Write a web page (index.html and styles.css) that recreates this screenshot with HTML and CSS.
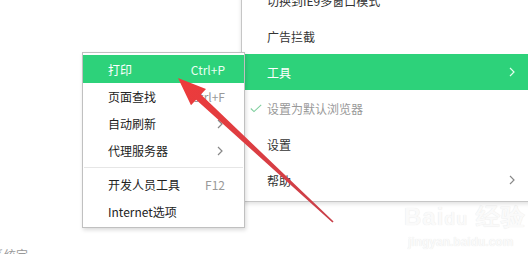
FILE: index.html
```html
<!DOCTYPE html>
<html lang="zh">
<head>
<meta charset="utf-8">
<link rel="stylesheet" href="styles.css">
</head>
<body>
<div class="stage">
  <div class="bg-text">系统定</div>
  <div class="watermark">
    <div class="wm-logo">Bai<span class="wm-du">du</span> 经验</div>
    <div class="wm-url">jingyan.baidu.com</div>
  </div>

  <div class="menu main-menu">
    <div class="item"><span class="label">切换到IE9多窗口模式</span></div>
    <div class="item"><span class="label">广告拦截</span></div>
    <div class="item active"><span class="label">工具</span><span class="chev">
      <svg width="6" height="10" viewBox="0 0 6 10"><path d="M1 1 L5 5 L1 9" fill="none" stroke="currentColor" stroke-width="1.2"/></svg></span></div>
    <div class="item muted"><span class="check">
      <svg width="12" height="9" viewBox="0 0 12 9"><path d="M0.8 4.5 L4 7.6 L11.2 0.8" fill="none" stroke="#7fcf9e" stroke-width="1.1"/></svg></span><span class="label">设置为默认浏览器</span></div>
    <div class="item"><span class="label">设置</span></div>
    <div class="item"><span class="label">帮助</span><span class="chev">
      <svg width="6" height="10" viewBox="0 0 6 10"><path d="M1 1 L5 5 L1 9" fill="none" stroke="currentColor" stroke-width="1.2"/></svg></span></div>
  </div>

  <div class="menu sub-menu">
    <div class="sitem active"><span class="label">打印</span><span class="key">Ctrl+P</span></div>
    <div class="sitem"><span class="label">页面查找</span><span class="key">Ctrl+F</span></div>
    <div class="sitem"><span class="label">自动刷新</span><span class="chev">
      <svg width="6" height="10" viewBox="0 0 6 10"><path d="M1 1 L5 5 L1 9" fill="none" stroke="currentColor" stroke-width="1.2"/></svg></span></div>
    <div class="sitem"><span class="label">代理服务器</span><span class="chev">
      <svg width="6" height="10" viewBox="0 0 6 10"><path d="M1 1 L5 5 L1 9" fill="none" stroke="currentColor" stroke-width="1.2"/></svg></span></div>
    <div class="sep"></div>
    <div class="sitem"><span class="label">开发人员工具</span><span class="key">F12</span></div>
    <div class="sitem"><span class="label">Internet选项</span></div>
  </div>

  <svg class="arrow" width="528" height="254" viewBox="0 0 528 254">
    <defs>
      <linearGradient id="ag" x1="0" y1="0" x2="1" y2="1">
        <stop offset="0" stop-color="#ee3b3b"/>
        <stop offset="1" stop-color="#c8404a"/>
      </linearGradient>
    </defs>
    <polygon fill="url(#ag)" points="178,78 206,89 200.9,94.5 333.6,221.6 332.4,222.4 196.1,99.7 191,105.2"/>
  </svg>
</div>
</body>
</html>
```

FILE: styles.css
```css
* { box-sizing: border-box; }
html, body { margin: 0; padding: 0; background: #fff; }
body {
  font-family: "Noto Sans CJK SC", "Microsoft YaHei", "Noto Sans", sans-serif;
  font-size: 12px;
  color: #333;
}
.stage {
  position: relative;
  width: 528px;
  height: 254px;
  overflow: hidden;
  background: #fff;
}
.bg-text {
  position: absolute;
  left: -8px;
  top: 247px;
  color: #999;
  font-size: 12px;
  line-height: 16px;
}
.watermark {
  position: absolute;
  left: 404px;
  top: 204px;
  color: #fafafa;
  text-shadow: 0 0 1px #e2e2e2;
}
.wm-logo { font-family: "Liberation Sans", sans-serif; font-size: 24px; font-weight: bold; line-height: 26px; letter-spacing: 1px; }
.wm-du { font-size: 18px; }
.wm-url { font-family: "Liberation Sans", sans-serif; font-size: 12px; font-weight: bold; line-height: 16px; margin-left: 4px; margin-top: 2px; }

.menu {
  position: absolute;
  background: #fff;
  display: flex;
  flex-direction: column;
}
.main-menu {
  left: 241px;
  top: -22px;
  width: 300px;
  border: 1px solid #c6c6c6;
  padding: 3px 0 3px 0;
  box-shadow: 0 2px 4px rgba(0,0,0,0.12);
}
.item {
  height: 36px;
  display: flex;
  align-items: center;
  padding: 0 25px 0 25px;
  position: relative;
  color: #333;
}
.item .label { flex: 1; }
.item.active { background: #2dd27a; color: #fff; }
.item.muted { color: #999; }
.item .check { position: absolute; left: 8px; top: 14px; display: flex; }
.chev { display: flex; align-items: center; color: #888; }
.item.active .chev { color: #e8fff0; }

.sub-menu {
  left: 82px;
  top: 52px;
  width: 163px;
  border: 1px solid #c0c0c0;
  padding: 2px 0 2px 0;
  box-shadow: 1px 2px 4px rgba(0,0,0,0.15);
  z-index: 2;
}
.sitem {
  height: 27px;
  display: flex;
  align-items: center;
  padding: 0 19px 0 25px;
  color: #222;
}
.sitem .label { flex: 1; }
.sitem .key { color: #999; }
.sitem .chev { margin-right: 2px; }
.sitem.active { background: #2dd27a; color: #fff; height: 28px; }
.sitem.active .key { color: #eafff2; }
.sep {
  height: 7px;
  margin: 0 1px;
  background: linear-gradient(#e6e6e6, #e6e6e6) center / 100% 1px no-repeat;
}
.arrow {
  position: absolute;
  left: 0;
  top: 0;
  z-index: 3;
}
```
